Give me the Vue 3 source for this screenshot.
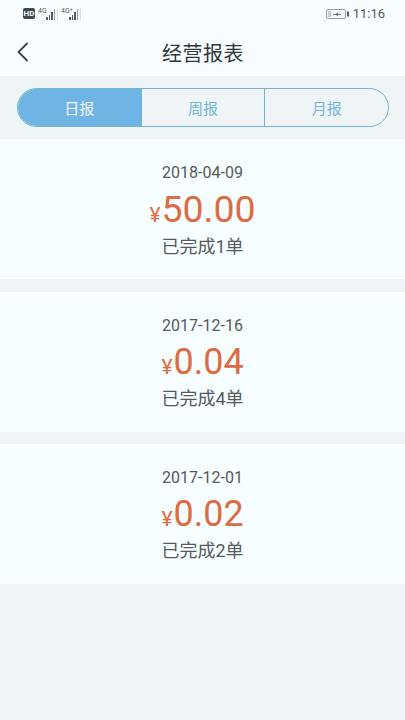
<script setup>
const tabs = [
  { label: '日报', active: true },
  { label: '周报', active: false },
  { label: '月报', active: false },
]
const reports = [
  { date: '2018-04-09', amount: '50.00', big: true, done: '已完成1单' },
  { date: '2017-12-16', amount: '0.04', big: false, done: '已完成4单' },
  { date: '2017-12-01', amount: '0.02', big: false, done: '已完成2单' },
]
const bars = [3, 5, 8, 11]
</script>

<template>
  <div class="page">
    <header class="top">
      <div class="status">
        <div class="status-left">
          <span class="hd">HD</span>
          <div class="signal">
            <span class="net">4G</span>
            <span class="bars"><i v-for="b in bars" :key="b" class="bar" :style="{ height: b + 'px' }"></i></span>
            <i class="sep"></i>
          </div>
          <div class="signal">
            <span class="net">4G⁺</span>
            <span class="bars"><i v-for="b in bars" :key="b" class="bar" :style="{ height: b + 'px' }"></i></span>
            <i class="sep"></i>
          </div>
        </div>
        <div class="status-right">
          <svg class="battery" width="23" height="10" viewBox="0 0 23 10">
            <rect x="0.5" y="0.5" width="19" height="9" rx="1.5" fill="#f4f7f7" stroke="#9a9e9f" />
            <rect x="2" y="2" width="3" height="6" fill="#c9cdcd" />
            <path d="M7 5h3l2-1.6V5h3v.8h-3v1.4l-2-1.4H7z" fill="#55595b" />
            <rect x="21" y="2.5" width="2" height="5" fill="#55595b" />
          </svg>
          <span class="time">11:16</span>
        </div>
      </div>
      <div class="nav">
        <svg class="back" width="14" height="22" viewBox="0 0 14 22">
          <path d="M11.5 2 2.5 11l9 9" fill="none" stroke="#3e4245" stroke-width="1.8" />
        </svg>
        <h1 class="title">经营报表</h1>
      </div>
    </header>

    <div class="tabs-wrap">
      <div class="tabs">
        <div v-for="t in tabs" :key="t.label" class="tab" :class="{ active: t.active }">{{ t.label }}</div>
      </div>
    </div>

    <section v-for="r in reports" :key="r.date" class="card">
      <div class="date">{{ r.date }}</div>
      <div class="amount" :class="{ big: r.big }"><span class="yen">¥</span>{{ r.amount }}</div>
      <div class="done">{{ r.done }}</div>
    </section>
  </div>
</template>

<style scoped>
.page {
  width: 405px;
  height: 720px;
  overflow: hidden;
  background: #eff4f7;
  font-family: "Roboto", "Noto Sans CJK SC", sans-serif;
}
.top {
  height: 76px;
  background: #f7fdfe;
  display: flex;
  flex-direction: column;
}
.status {
  height: 27px;
  padding: 0 20px 0 23px;
  display: flex;
  align-items: center;
  justify-content: space-between;
}
.status-left {
  display: flex;
  align-items: center;
  gap: 3px;
}
.hd {
  width: 12px;
  height: 11px;
  background: #44484a;
  color: #f7fdfe;
  border-radius: 2px;
  font-size: 8px;
  font-weight: 700;
  line-height: 11px;
  text-align: center;
}
.signal {
  display: flex;
  align-items: flex-end;
  height: 12px;
}
.net {
  font-size: 7px;
  line-height: 6px;
  color: #55595b;
  align-self: flex-start;
  width: 8px;
  white-space: nowrap;
}
.bars {
  display: flex;
  align-items: flex-end;
  gap: 1px;
}
.bar {
  display: block;
  width: 1.5px;
  background: #55595b;
}
.bar:nth-child(4) {
  background: #9ea2a3;
}
.sep {
  display: block;
  width: 1px;
  height: 12px;
  background: #d8dcdd;
  margin-left: 2px;
}
.status-right {
  display: flex;
  align-items: center;
  gap: 4px;
}
.time {
  font-size: 13px;
  color: #55595b;
}
.nav {
  flex: 1;
  position: relative;
  display: flex;
  align-items: center;
  justify-content: center;
  padding: 1px 0 0 1px;
}
.back {
  position: absolute;
  left: 16px;
  top: 14px;
}
.title {
  margin: 0;
  font-size: 20px;
  font-weight: 400;
  color: #33373a;
  letter-spacing: 0.5px;
}
.tabs-wrap {
  height: 63px;
  padding: 12px 16px 12px 17px;
  box-sizing: border-box;
}
.tabs {
  height: 39px;
  width: 372px;
  box-sizing: border-box;
  display: flex;
  border: 1.5px solid #75b4cf;
  border-radius: 20px;
  overflow: hidden;
}
.tab {
  flex: 1;
  display: flex;
  align-items: center;
  justify-content: center;
  font-size: 15px;
  color: #74b6d2;
  border-left: 1.5px solid #75b4cf;
}
.tab.active {
  background: #6eb5e6;
  color: #f2f8fc;
  border-left: 0;
}
.card {
  height: 140px;
  margin-bottom: 12.5px;
  background: #f7feff;
  display: flex;
  flex-direction: column;
  align-items: center;
  padding-top: 24px;
  box-sizing: border-box;
}
.date {
  font-size: 16px;
  line-height: 20px;
  color: #55595c;
}
.amount {
  font-size: 36px;
  line-height: 42px;
  margin-top: 5px;
  color: #dd6b44;
  display: flex;
  align-items: baseline;
}
.amount.big {
  font-size: 37.5px;
}
.yen {
  font-size: 21px;
  margin-right: 1px;
}
.done {
  font-size: 18px;
  line-height: 24px;
  color: #55595c;
  margin-top: -1px;
}
</style>
